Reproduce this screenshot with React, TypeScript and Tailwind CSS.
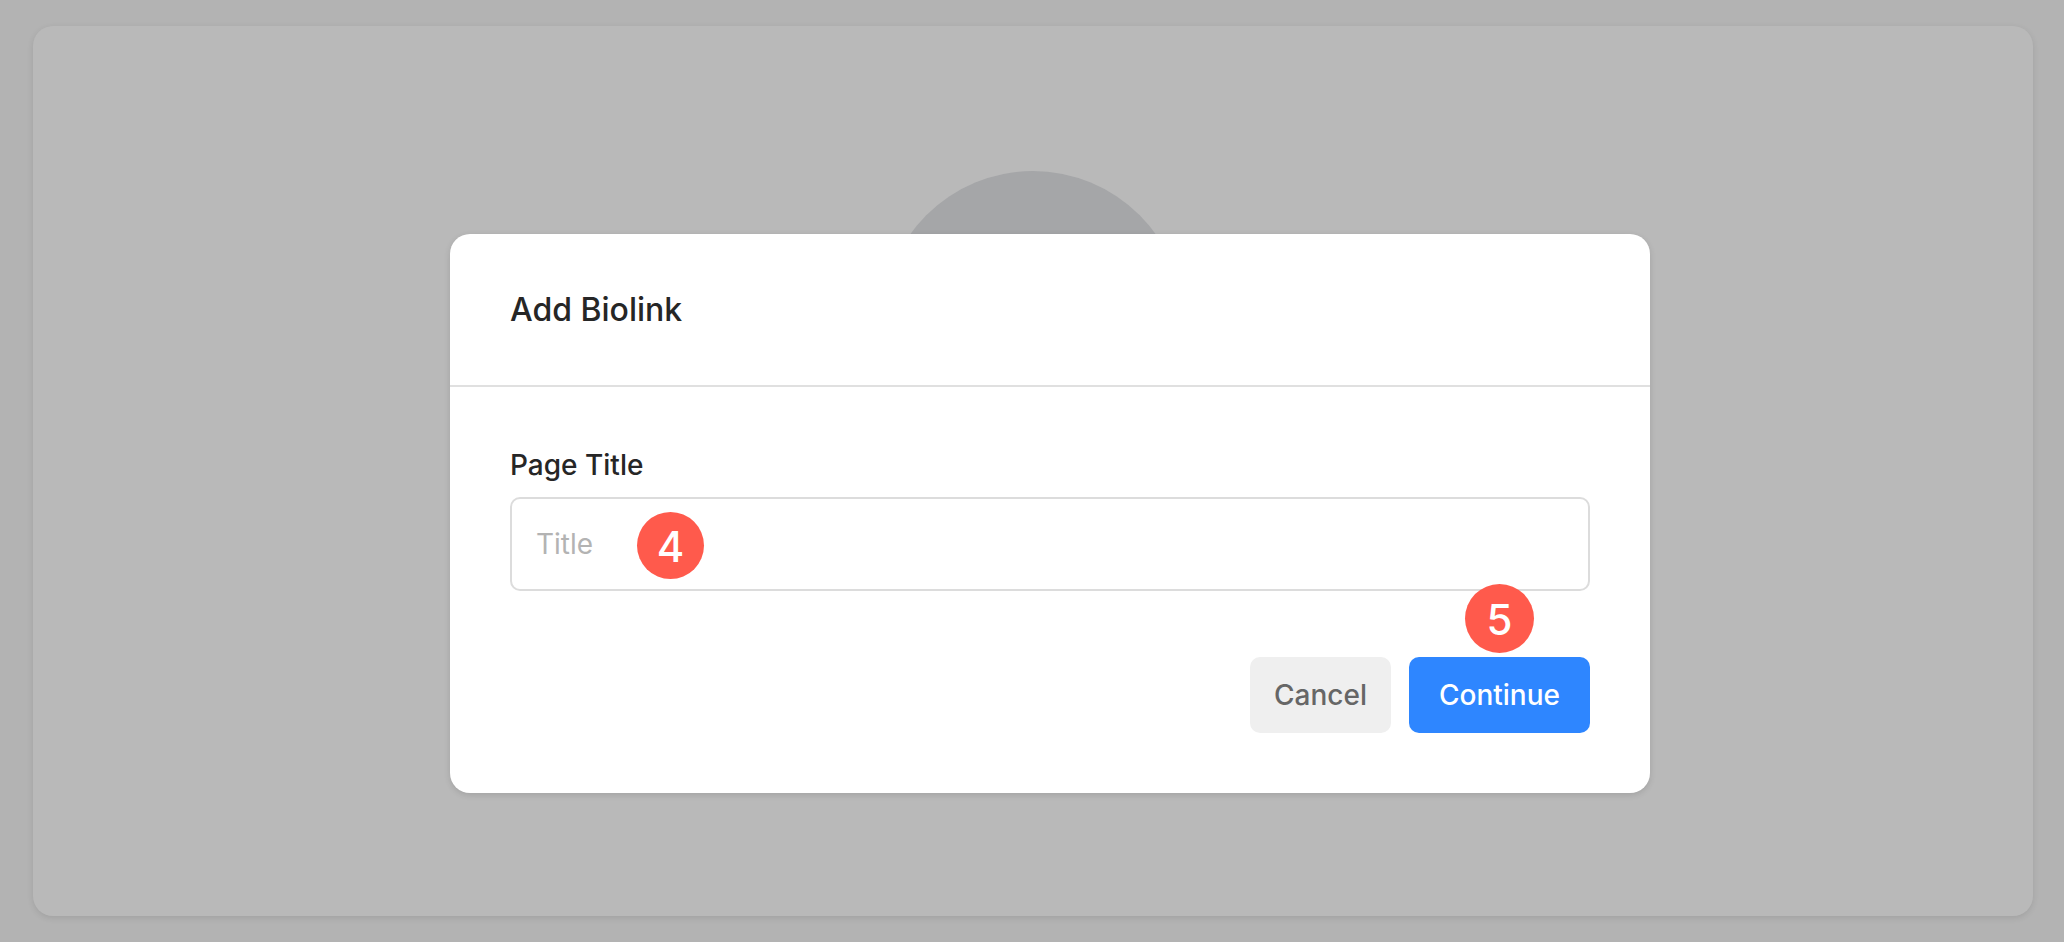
import type { ReactNode } from "react";

function StepMarker({ children, className }: { children: ReactNode; className: string }) {
  return (
    <span
      className={`pointer-events-none absolute flex items-center justify-center rounded-full bg-[#ff5a4c] pt-0.5 text-[42px] leading-none font-medium text-white ${className}`}
    >
      {children}
    </span>
  );
}

function AddBiolinkDialog() {
  return (
    <form
      role="dialog"
      aria-labelledby="dialog-title"
      onSubmit={(e) => e.preventDefault()}
      className="w-full max-w-[1200px] rounded-[20px] bg-white shadow-[0_2px_6px_rgba(0,0,0,0.12)]"
    >
      <header className="border-b-2 border-[#e0e0e0] px-[60px] pt-14 pb-[55px]">
        <h2 id="dialog-title" className="text-[32px] leading-10 font-medium text-[#262626]">
          Add Biolink
        </h2>
      </header>
      <div className="p-[60px]">
        <label htmlFor="page-title" className="block text-[28px] leading-9 font-medium text-[#262626]">
          Page Title
        </label>
        <div className="relative mt-[14px]">
          <input
            id="page-title"
            type="text"
            placeholder="Title"
            className="block h-[94px] w-full rounded-[10px] border-2 border-[#dcdcdc] bg-white px-6 text-[28px] text-[#262626] outline-none placeholder:text-[#b3b3b3]"
          />
          <StepMarker className="top-[15px] left-[127px] size-[67px]">4</StepMarker>
        </div>
        <div className="mt-[66px] flex justify-end gap-[18px]">
          <button type="button" className="h-[76px] rounded-[10px] bg-[#efefef] px-6 text-[28px] font-medium text-[#666666]">
            Cancel
          </button>
          <div className="relative">
            <button type="submit" className="h-[76px] rounded-[10px] bg-[#2e86ff] px-[30px] text-[28px] font-medium text-white">
              Continue
            </button>
            <StepMarker className="-top-[73px] left-[56px] size-[69px]">5</StepMarker>
          </div>
        </div>
      </div>
    </form>
  );
}

export default function App() {
  return (
    <div className="relative flex min-h-screen flex-col bg-[#b3b3b3] pt-[26px] pr-[31px] pb-[26px] pl-[33px] font-['Inter','Liberation_Sans',sans-serif]">
      <main className="flex grow justify-center rounded-[20px] bg-[#b9b9b9] pt-[145px] shadow-[0_2px_6px_rgba(0,0,0,0.1)]">
        <div className="size-[302px] rounded-full bg-[#a5a6a8]" />
      </main>
      <div className="absolute inset-0 flex items-start justify-center pt-[234px] pl-9">
        <AddBiolinkDialog />
      </div>
    </div>
  );
}
